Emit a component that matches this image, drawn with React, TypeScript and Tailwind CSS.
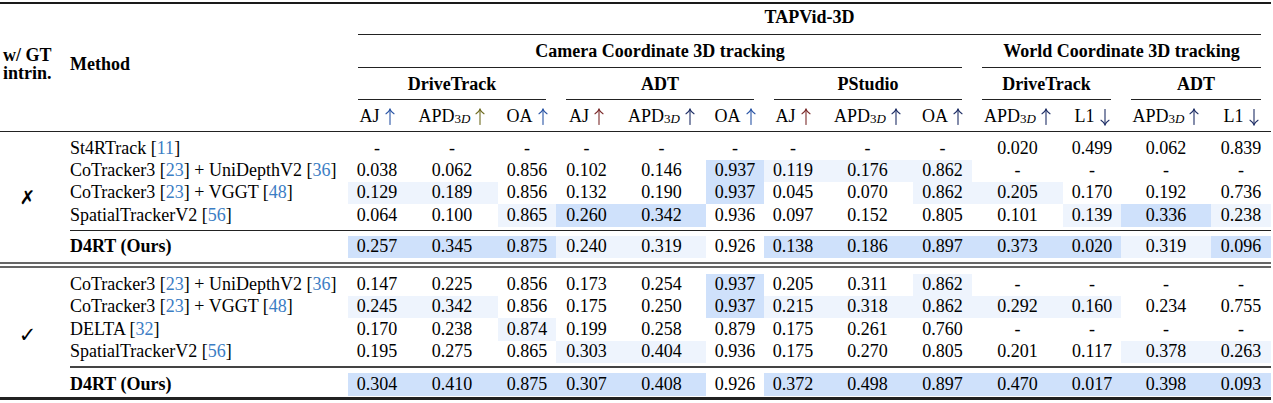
import React from 'react';

const GRID =
  'grid grid-cols-[278px_58px_92px_58px_61px_89px_58px_58px_91px_59px_91px_58px_90px_60px]';

const Cite = ({ n }: { n: string }) => (
  <>
    [<span className="text-[#3b7dc4]">{n}</span>]
  </>
);

const Sub = () => (
  <span className="relative top-[3px] text-[13px]">
    3<i>D</i>
  </span>
);

type Row = {
  m: React.ReactNode;
  v: string[];
  s: string;
  h: string;
  bold?: boolean;
};

const shadeCls = (c: string) =>
  c === '2' ? 'bg-[#cfe1fb]' : c === '1' ? 'bg-[#eef4fd]' : '';

const BodyRow = ({ r }: { r: Row }) => (
  <div className={`${GRID} ${r.h}`}>
    <div className={`flex items-center pb-[2px] whitespace-nowrap ${r.bold ? 'font-bold' : ''}`}>{r.m}</div>
    {r.v.map((v, i) => (
      <div key={i} className={`flex items-center justify-center pb-[2px] ${shadeCls(r.s[i])}`}>
        {v}
      </div>
    ))}
  </div>
);

const block1: Row[] = [
  {
    m: (
      <>
        St4RTrack <Cite n="11" />
      </>
    ),
    v: ['-', '-', '-', '-', '-', '-', '-', '-', '-', '0.020', '0.499', '0.062', '0.839'],
    s: '0000000000000',
    h: 'h-[23px]',
  },
  {
    m: (
      <>
        CoTracker3 <Cite n="23" /> + UniDepthV2 <Cite n="36" />
      </>
    ),
    v: ['0.038', '0.062', '0.856', '0.102', '0.146', '0.937', '0.119', '0.176', '0.862', '-', '-', '-', '-'],
    s: '0000021110000',
    h: 'h-[22px]',
  },
  {
    m: (
      <>
        CoTracker3 <Cite n="23" /> + VGGT <Cite n="48" />
      </>
    ),
    v: ['0.129', '0.189', '0.856', '0.132', '0.190', '0.937', '0.045', '0.070', '0.862', '0.205', '0.170', '0.192', '0.736'],
    s: '1100020011000',
    h: 'h-[22px]',
  },
  {
    m: (
      <>
        SpatialTrackerV2 <Cite n="56" />
      </>
    ),
    v: ['0.064', '0.100', '0.865', '0.260', '0.342', '0.936', '0.097', '0.152', '0.805', '0.101', '0.139', '0.336', '0.238'],
    s: '0012200000121',
    h: 'h-[23px]',
  },
];

const ours1: Row = {
  m: 'D4RT (Ours)',
  v: ['0.257', '0.345', '0.875', '0.240', '0.319', '0.926', '0.138', '0.186', '0.897', '0.373', '0.020', '0.319', '0.096'],
  s: '2221102222212',
  h: 'h-[22px]',
  bold: true,
};

const block2: Row[] = [
  {
    m: (
      <>
        CoTracker3 <Cite n="23" /> + UniDepthV2 <Cite n="36" />
      </>
    ),
    v: ['0.147', '0.225', '0.856', '0.173', '0.254', '0.937', '0.205', '0.311', '0.862', '-', '-', '-', '-'],
    s: '0000020010000',
    h: 'h-[22px]',
  },
  {
    m: (
      <>
        CoTracker3 <Cite n="23" /> + VGGT <Cite n="48" />
      </>
    ),
    v: ['0.245', '0.342', '0.856', '0.175', '0.250', '0.937', '0.215', '0.318', '0.862', '0.292', '0.160', '0.234', '0.755'],
    s: '1100021111100',
    h: 'h-[22px]',
  },
  {
    m: (
      <>
        DELTA <Cite n="32" />
      </>
    ),
    v: ['0.170', '0.238', '0.874', '0.199', '0.258', '0.879', '0.175', '0.261', '0.760', '-', '-', '-', '-'],
    s: '0010000000000',
    h: 'h-[23px]',
  },
  {
    m: (
      <>
        SpatialTrackerV2 <Cite n="56" />
      </>
    ),
    v: ['0.195', '0.275', '0.865', '0.303', '0.404', '0.936', '0.175', '0.270', '0.805', '0.201', '0.117', '0.378', '0.263'],
    s: '0001100000011',
    h: 'h-[22px]',
  },
];

const ours2: Row = {
  m: 'D4RT (Ours)',
  v: ['0.304', '0.410', '0.875', '0.307', '0.408', '0.926', '0.372', '0.498', '0.897', '0.470', '0.017', '0.398', '0.093'],
  s: '2222202222222',
  h: 'h-[23px]',
  bold: true,
};

const Arrow = ({ down, color }: { down?: boolean; color: string }) => (
  <svg
    width="10"
    height="17"
    viewBox="0 0 10 17"
    className={`ml-[5px] relative top-[1px] ${down ? 'rotate-180 top-[2px]' : ''}`}
    fill="none"
    stroke={color}
    strokeWidth="1.1"
    strokeLinecap="round"
  >
    <path d="M5 1.2 V16.5" />
    <path d="M1 5.8 C3 4.5 4.3 3 5 1.2 C5.7 3 7 4.5 9 5.8" />
  </svg>
);

const Metric = ({ label, sub, down, color }: { label: string; sub?: boolean; down?: boolean; color: string }) => (
  <div className="row-start-7 flex items-center justify-center whitespace-nowrap">
    {label}
    {sub ? <Sub /> : null}
    <Arrow down={down} color={color} />
  </div>
);

const NAVY = '#1f2f66';
const BLUE = '#2a55a5';
const OLIVE = '#6e6b20';
const RED = '#7b2b2b';

export default function App() {
  return (
    <div className="w-[1273px] h-[403px] bg-white text-black font-['Liberation_Serif','Times_New_Roman',serif] text-[18px] leading-none">
      <div className="h-[2px]" />
      <div className="h-[2px] w-[1271px] bg-[#1a1a1a]" />
      {/* header */}
      <div className="grid grid-cols-[70px_278px_58px_92px_58px_61px_89px_58px_58px_91px_59px_91px_58px_90px_60px] grid-rows-[30px_1px_32px_1px_31px_1px_31px] w-[1271px]">
        <div className="col-start-1 row-start-1 row-span-7 flex flex-col justify-center pb-[8px] pl-[3px] font-bold leading-[18px]">
          <span className="block h-[18px]">w/ GT</span>
          <span className="block h-[18px]">intrin.</span>
        </div>
        <div className="col-start-2 row-start-1 row-span-7 flex items-center pb-[8px] font-bold">Method</div>
        <div className="col-start-3 col-span-13 row-start-1 flex items-center justify-center pb-[4px] font-bold">TAPVid-3D</div>
        <div className="col-start-3 col-span-13 row-start-2 mx-[10px] bg-[#222]" />
        <div className="col-start-3 col-span-9 row-start-3 flex items-center justify-center font-bold">Camera Coordinate 3D tracking</div>
        <div className="col-start-12 col-span-4 row-start-3 flex items-center justify-center font-bold">World Coordinate 3D tracking</div>
        <div className="col-start-3 col-span-9 row-start-4 mx-[10px] bg-[#222]" />
        <div className="col-start-12 col-span-4 row-start-4 mx-[10px] bg-[#222]" />
        <div className="col-start-3 col-span-3 row-start-5 flex items-center justify-center font-bold">DriveTrack</div>
        <div className="col-start-6 col-span-3 row-start-5 flex items-center justify-center font-bold">ADT</div>
        <div className="col-start-9 col-span-3 row-start-5 flex items-center justify-center font-bold">PStudio</div>
        <div className="col-start-12 col-span-2 row-start-5 flex items-center justify-center font-bold">DriveTrack</div>
        <div className="col-start-14 col-span-2 row-start-5 flex items-center justify-center font-bold">ADT</div>
        <div className="col-start-3 col-span-3 row-start-6 mx-[10px] bg-[#222]" />
        <div className="col-start-6 col-span-3 row-start-6 mx-[10px] bg-[#222]" />
        <div className="col-start-9 col-span-3 row-start-6 mx-[10px] bg-[#222]" />
        <div className="col-start-12 col-span-2 row-start-6 mx-[10px] bg-[#222]" />
        <div className="col-start-14 col-span-2 row-start-6 mx-[10px] bg-[#222]" />
        <div className="contents">
          <Metric label="AJ" color={BLUE} />
          <Metric label="APD" sub color={OLIVE} />
          <Metric label="OA" color={BLUE} />
          <Metric label="AJ" color={RED} />
          <Metric label="APD" sub color={NAVY} />
          <Metric label="OA" color={BLUE} />
          <Metric label="AJ" color={RED} />
          <Metric label="APD" sub color={NAVY} />
          <Metric label="OA" color={NAVY} />
          <Metric label="APD" sub color={NAVY} />
          <Metric label="L1" down color={NAVY} />
          <Metric label="APD" sub color={NAVY} />
          <Metric label="L1" down color={NAVY} />
        </div>
      </div>
      <div className="h-px w-[1271px] bg-[#222]" />
      <div className="h-[5px]" />
      {/* block 1 */}
      <div className="flex w-[1271px]">
        <div className="w-[70px] flex items-center">
          <div className="w-[55px] text-center font-['DejaVu_Sans',sans-serif] text-[19px]">✗</div>
        </div>
        <div className="flex flex-col w-[1201px]">
          {block1.map((r, i) => (
            <BodyRow key={i} r={r} />
          ))}
          <div className="h-[3px]" />
          <div className="h-px bg-[#222]" />
          <div className="h-[5px]" />
          <BodyRow r={ours1} />
        </div>
      </div>
      <div className="h-[4px]" />
      <div className="h-[2px] w-[1271px] bg-[#666]" />
      <div className="h-[2px]" />
      <div className="h-[2px] w-[1271px] bg-[#666]" />
      <div className="h-[6px]" />
      {/* block 2 */}
      <div className="flex w-[1271px]">
        <div className="w-[70px] flex items-center">
          <div className="w-[55px] text-center font-['DejaVu_Sans',sans-serif] text-[21px] font-bold">✓</div>
        </div>
        <div className="flex flex-col w-[1201px]">
          {block2.map((r, i) => (
            <BodyRow key={i} r={r} />
          ))}
          <div className="h-[3px]" />
          <div className="h-[1.5px] bg-[#444]" />
          <div className="h-[5.5px]" />
          <BodyRow r={ours2} />
        </div>
      </div>
      <div className="h-[1px]" />
      <div className="h-[2.5px] w-[1271px] bg-[#222]" />
    </div>
  );
}
